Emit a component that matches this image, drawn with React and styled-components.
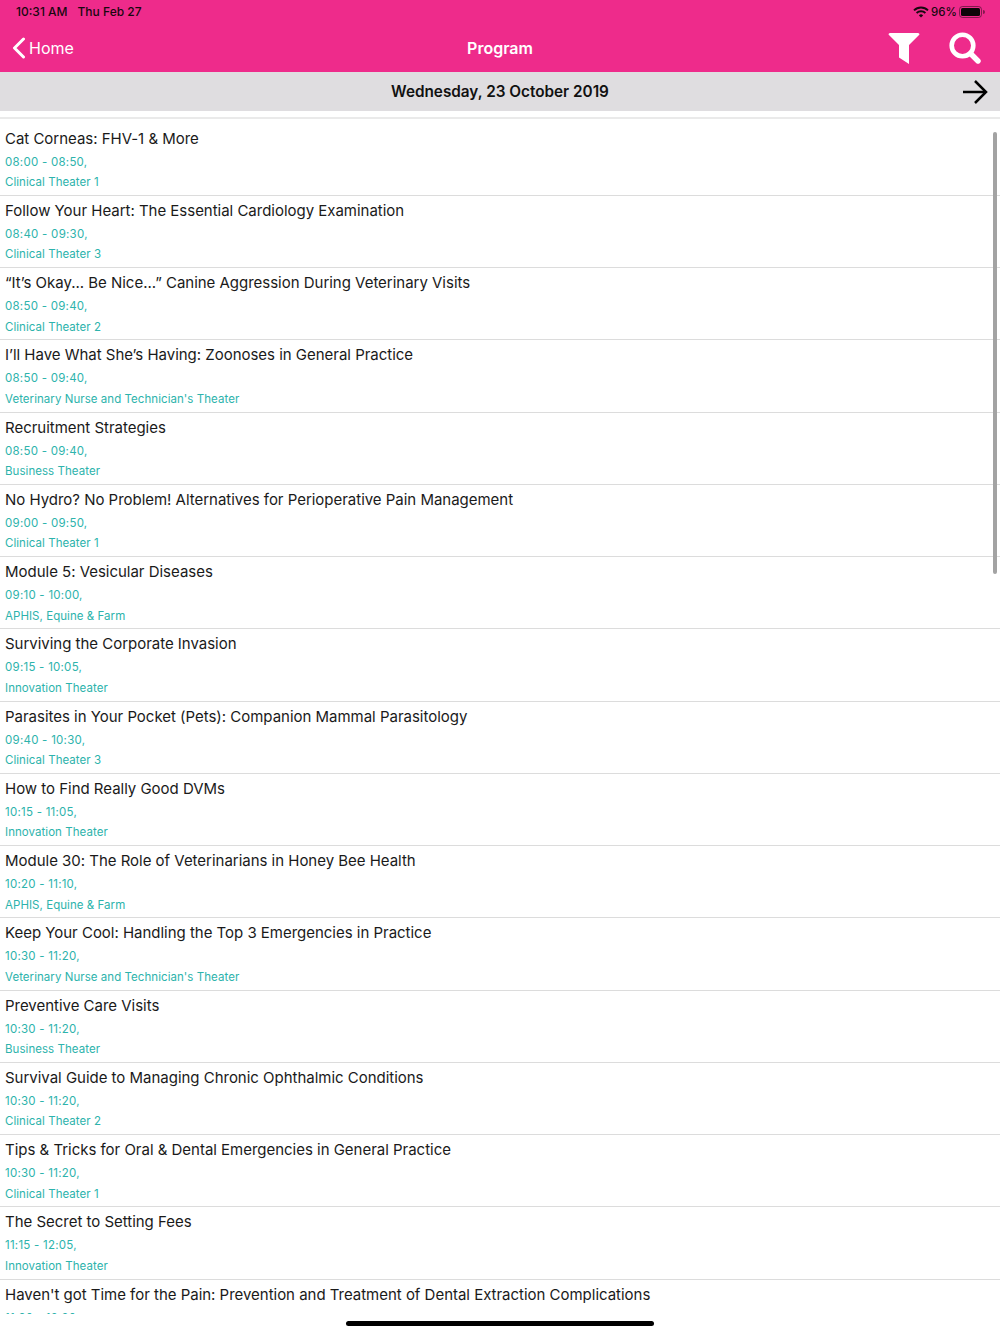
import React from 'react';
import styled, { createGlobalStyle } from 'styled-components';

const GlobalStyle = createGlobalStyle`
  html, body {
    margin: 0;
    padding: 0;
    background: #fff;
    font-family: Inter, "Liberation Sans", sans-serif;
  }
`;

const Screen = styled.div`
  width: 1000px;
  height: 1334px;
  display: flex;
  flex-direction: column;
  overflow: hidden;
  position: relative;
  background: #fff;
`;

const Header = styled.header`
  height: 72px;
  flex: none;
  background: #ee2b8b;
  display: flex;
  flex-direction: column;
`;

const StatusBar = styled.div`
  height: 23px;
  display: flex;
  align-items: center;
  justify-content: space-between;
  padding: 0 15px 0 16px;
  font-size: 12px;
  font-weight: 500;
  color: #17080f;
`;

const StatusGroup = styled.div`
  display: flex;
  align-items: center;
  gap: ${(p) => p.$gap}px;
`;

const Percent = styled.span`
  font-size: 11.5px;
  margin: 0 2px;
`;

const NavBar = styled.div`
  flex: 1;
  display: grid;
  grid-template-columns: 1fr auto 1fr;
  align-items: center;
  color: #fff;
`;

const BackLink = styled.div`
  display: flex;
  align-items: center;
  gap: 3px;
  padding-left: 12px;
  font-size: 16px;
`;

const NavTitle = styled.div`
  font-size: 16px;
  font-weight: 600;
`;

const NavActions = styled.div`
  display: flex;
  justify-content: flex-end;
  align-items: center;
  gap: 29px;
  padding-right: 19px;
`;

const DateBar = styled.div`
  height: 39px;
  flex: none;
  background: #dfdde0;
  display: grid;
  grid-template-columns: 1fr auto 1fr;
  align-items: center;
  font-size: 15.3px;
  font-weight: 600;
  color: #111;
`;

const DateNext = styled.div`
  display: flex;
  justify-content: flex-end;
  padding-right: 12px;
`;

const ListArea = styled.div`
  margin-top: 6px;
  height: 1197px;
  flex: none;
  box-sizing: border-box;
  overflow: hidden;
  border-top: 2px solid #eaeaea;
  padding-top: 4.5px;
`;

const Row = styled.div`
  height: 72.25px;
  box-sizing: border-box;
  border-bottom: 1px solid #dcdcdc;
  padding: 5px 5px 0;
  overflow: hidden;
`;

const Title = styled.div`
  font-size: 15px;
  line-height: 20px;
  letter-spacing: -0.02px;
  color: #1a1a1a;
`;

const Time = styled.div`
  margin-top: 3px;
  font-size: 11.5px;
  line-height: 20.5px;
  letter-spacing: 0.25px;
  color: #2db3ac;
`;

const Place = styled.div`
  font-size: 11.5px;
  line-height: 20.5px;
  letter-spacing: 0.05px;
  color: #2db3ac;
`;

const ScrollThumb = styled.div`
  position: absolute;
  top: 132px;
  left: 993px;
  width: 4px;
  height: 442px;
  border-radius: 2px;
  background: #a3a3a3;
`;

const HomeIndicator = styled.div`
  position: absolute;
  top: 1321px;
  left: 346px;
  width: 308px;
  height: 5px;
  border-radius: 3px;
  background: #000;
`;

const Wifi = () => (
  <svg width="16" height="12" viewBox="0 0 16 12" fill="none" stroke="#17080f" strokeWidth="1.9">
    <path d="M1 4.4 A10 10 0 0 1 15 4.4" />
    <path d="M3.6 7 A6.4 6.4 0 0 1 12.4 7" />
    <path d="M8 11.6 L5.9 9.4 A3 3 0 0 1 10.1 9.4 Z" fill="#17080f" stroke="none" />
  </svg>
);

const Battery = () => (
  <svg width="26" height="12" viewBox="0 0 26 12">
    <rect x="0.5" y="0.5" width="22" height="11" rx="3" fill="none" stroke="#17080f" strokeOpacity="0.5" />
    <rect x="2" y="2" width="19" height="8" rx="1.5" fill="#0d0508" />
    <path d="M24 4 a2 2 0 0 1 0 4 z" fill="#17080f" fillOpacity="0.5" />
  </svg>
);

const BackChevron = () => (
  <svg width="14" height="22" viewBox="0 0 14 22" fill="none" stroke="#fff" strokeWidth="3" strokeLinecap="round" strokeLinejoin="round">
    <path d="M11.5 2 L2.5 11 L11.5 20" />
  </svg>
);

const FilterIcon = () => (
  <svg width="32" height="32" viewBox="0 0 32 32">
    <path d="M0.5 2.5 Q0.5 1 2 1 H30 Q31.5 1 31.5 2.5 L21 13 V32 L11 25.5 V13 Z" fill="#fff" />
  </svg>
);

const SearchIcon = () => (
  <svg width="32" height="32" viewBox="0 0 32 32" fill="none" stroke="#fff">
    <circle cx="13.5" cy="13.5" r="10.8" strokeWidth="4.6" />
    <path d="M21.5 21.5 L29 29" strokeWidth="5.4" strokeLinecap="round" />
  </svg>
);

const NextArrow = () => (
  <svg width="26" height="26" viewBox="0 0 26 26" fill="none" stroke="#000" strokeWidth="2.5">
    <path d="M1 13 H24" />
    <path d="M13 2 L24 13 L13 24" />
  </svg>
);

const sessions = [
  ['Cat Corneas: FHV-1 & More', '08:00 - 08:50,', 'Clinical Theater 1'],
  ['Follow Your Heart: The Essential Cardiology Examination', '08:40 - 09:30,', 'Clinical Theater 3'],
  ['“It’s Okay... Be Nice...” Canine Aggression During Veterinary Visits', '08:50 - 09:40,', 'Clinical Theater 2'],
  ['I’ll Have What She’s Having: Zoonoses in General Practice', '08:50 - 09:40,', "Veterinary Nurse and Technician's Theater"],
  ['Recruitment Strategies', '08:50 - 09:40,', 'Business Theater'],
  ['No Hydro? No Problem! Alternatives for Perioperative Pain Management', '09:00 - 09:50,', 'Clinical Theater 1'],
  ['Module 5: Vesicular Diseases', '09:10 - 10:00,', 'APHIS, Equine & Farm'],
  ['Surviving the Corporate Invasion', '09:15 - 10:05,', 'Innovation Theater'],
  ['Parasites in Your Pocket (Pets): Companion Mammal Parasitology', '09:40 - 10:30,', 'Clinical Theater 3'],
  ['How to Find Really Good DVMs', '10:15 - 11:05,', 'Innovation Theater'],
  ['Module 30: The Role of Veterinarians in Honey Bee Health', '10:20 - 11:10,', 'APHIS, Equine & Farm'],
  ['Keep Your Cool: Handling the Top 3 Emergencies in Practice', '10:30 - 11:20,', "Veterinary Nurse and Technician's Theater"],
  ['Preventive Care Visits', '10:30 - 11:20,', 'Business Theater'],
  ['Survival Guide to Managing Chronic Ophthalmic Conditions', '10:30 - 11:20,', 'Clinical Theater 2'],
  ['Tips & Tricks for Oral & Dental Emergencies in General Practice', '10:30 - 11:20,', 'Clinical Theater 1'],
  ['The Secret to Setting Fees', '11:15 - 12:05,', 'Innovation Theater'],
  ["Haven't got Time for the Pain: Prevention and Treatment of Dental Extraction Complications", '11:30 - 12:20,', 'Clinical Theater 2'],
];

const App = () => (
  <Screen>
    <GlobalStyle />
    <Header>
      <StatusBar>
        <StatusGroup $gap={10}>
          <span>10:31 AM</span>
          <span>Thu Feb 27</span>
        </StatusGroup>
        <StatusGroup $gap={0}>
          <Wifi />
          <Percent>96%</Percent>
          <Battery />
        </StatusGroup>
      </StatusBar>
      <NavBar>
        <BackLink>
          <BackChevron />
          <span>Home</span>
        </BackLink>
        <NavTitle>Program</NavTitle>
        <NavActions>
          <FilterIcon />
          <SearchIcon />
        </NavActions>
      </NavBar>
    </Header>
    <DateBar>
      <span />
      <span>Wednesday, 23 October 2019</span>
      <DateNext>
        <NextArrow />
      </DateNext>
    </DateBar>
    <ListArea>
      {sessions.map(([title, time, place]) => (
        <Row key={title}>
          <Title>{title}</Title>
          <Time>{time}</Time>
          <Place>{place}</Place>
        </Row>
      ))}
    </ListArea>
    <ScrollThumb />
    <HomeIndicator />
  </Screen>
);

export default App;
